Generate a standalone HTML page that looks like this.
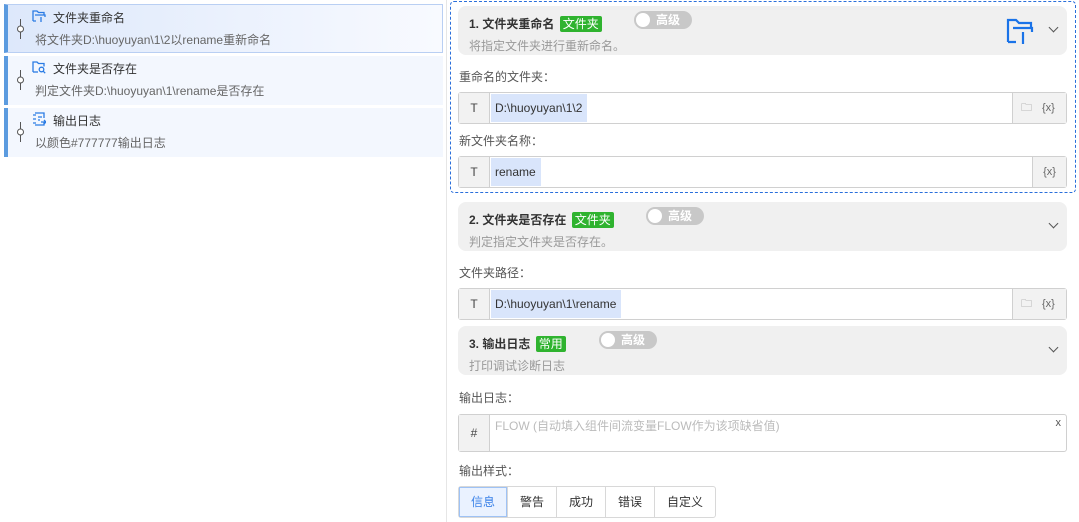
<!DOCTYPE html>
<html><head><meta charset="utf-8"><style>
*{box-sizing:border-box;margin:0;padding:0}
body{width:1079px;height:522px;overflow:hidden;background:#fff;font-family:"Liberation Sans","Noto Sans CJK SC",sans-serif;font-size:12px;color:#333;position:relative}
.abs{position:absolute}
.item{position:absolute;left:4px;width:439px;height:49px;background:#f3f7fe;border-left:4px solid #5b9bdf}
.item.sel{background:linear-gradient(90deg,#dde8fb,#f8faff);border:1px solid #b9cff3;border-left:4px solid #5b9bdf}
.item .t{position:absolute;left:45px;top:4px;font-size:12px;color:#333}
.item .d{position:absolute;left:27px;top:26px;font-size:12px;color:#666}
.item .pin{position:absolute;left:8px;top:14px;width:9px;height:20px}
.item .ic{position:absolute;left:24px;top:4px}
.hdr{position:absolute;left:458px;width:609px;height:49px;background:#f0f0f0;border-radius:8px}
.hdr .t{position:absolute;left:11px;top:9px;font-weight:bold;font-size:12px;color:#333}
.hdr .d{position:absolute;left:11px;top:31px;color:#999;font-size:12px}
.tag{display:inline-block;background:#2fb32f;color:#fff;font-weight:normal;padding:0 3px;border-radius:2px;margin-left:2px;line-height:16px}
.tog{position:absolute;top:5px;width:58px;height:18px;border-radius:9px;background:#c8c8c8;color:#fff;font-weight:bold;font-size:12px;line-height:18px;padding-left:22px}
.tog::before{content:"";position:absolute;left:2px;top:2px;width:14px;height:14px;border-radius:50%;background:#fff}
.chev{position:absolute;right:10px;top:18px;width:7px;height:7px;border-right:1.3px solid #555;border-bottom:1.3px solid #555;transform:rotate(45deg)}
.lbl{position:absolute;left:459px;color:#555;font-size:12px}
.inp{position:absolute;left:458px;width:609px;height:32px;border:1px solid #d0d0d0;border-radius:3px;background:#fff}
.inp .pre{position:absolute;left:0;top:0;bottom:0;width:31px;background:#f2f2f2;border-right:1px solid #d0d0d0;text-align:center;line-height:30px;color:#444}
.inp .val{position:absolute;left:32px;top:1px;height:28px;background:#d9e5fb;line-height:28px;padding:0 5px 0 4px;color:#333}
.inp .suf{position:absolute;right:0;top:0;bottom:0;background:#f2f2f2;border-left:1px solid #d0d0d0;color:#666;line-height:30px;font-size:11px}
.btns{position:absolute;left:458px;top:486px;height:32px;display:flex;border:1px solid #d8d8d8;border-radius:3px}
.btns div{width:49px;text-align:center;line-height:30px;border-right:1px solid #d8d8d8;color:#333;font-size:12px}
.btns div:last-child{border-right:none;width:60px}
.btns .on{background:#eaf2ff;color:#3b82e8;box-shadow:inset 0 0 0 1px #9ec2f5}
</style></head><body>

<div class="item sel" style="top:4px">
<svg class="pin" viewBox="0 0 9 20"><line x1="4.5" y1="0" x2="4.5" y2="20" stroke="#555"/><circle cx="4.5" cy="10" r="3" fill="#fff" stroke="#555"/></svg>
<svg class="ic" width="14" height="14" viewBox="0 0 14 14" fill="none" stroke="#2a7be4" stroke-width="1.3"><path d="M1 12V2h4l1.5 1.5H12v2"/><path d="M1 12h3M3 6h10v2M9 8v5"/></svg>
<div class="t">文件夹重命名</div><div class="d">将文件夹D:\huoyuyan\1\2以rename重新命名</div></div>
<div class="item" style="top:56px">
<svg class="pin" viewBox="0 0 9 20"><line x1="4.5" y1="0" x2="4.5" y2="20" stroke="#555"/><circle cx="4.5" cy="10" r="3" fill="#fff" stroke="#555"/></svg>
<svg class="ic" width="14" height="14" viewBox="0 0 14 14" fill="none" stroke="#2a7be4" stroke-width="1.3"><path d="M1 12V2h4l1.5 1.5H12v3"/><path d="M1 12h5"/><circle cx="9.5" cy="9.5" r="2.3"/><path d="M11.2 11.2l2 2"/></svg>
<div class="t">文件夹是否存在</div><div class="d">判定文件夹D:\huoyuyan\1\rename是否存在</div></div>
<div class="item" style="top:108px">
<svg class="pin" viewBox="0 0 9 20"><line x1="4.5" y1="0" x2="4.5" y2="20" stroke="#555"/><circle cx="4.5" cy="10" r="3" fill="#fff" stroke="#555"/></svg>
<svg class="ic" width="14" height="14" viewBox="0 0 14 14" fill="none" stroke="#2a7be4" stroke-width="1.3"><path d="M3 1h9v5M3 13h9V10M1 3h3M1 7h3M1 11h3M6 5h4M6 8h2M9 10h5M12 8l2 2-2 2"/></svg>
<div class="t">输出日志</div><div class="d">以颜色#777777输出日志</div></div>

<div class="abs" style="left:446px;top:0;width:1px;height:522px;background:#e6e6e6"></div>
<div class="abs" style="left:450px;top:1px;width:626px;height:192px;border:1px dashed #2a6fdb;border-radius:4px"></div>

<div class="hdr" style="top:6px"><div class="t">1. 文件夹重命名 <span class="tag">文件夹</span></div><div class="tog" style="left:176px">高级</div><div class="d">将指定文件夹进行重新命名。</div>
<svg class="abs" style="left:548px;top:11px" width="28" height="28" viewBox="0 0 28 28" fill="none" stroke="#1a73e8" stroke-width="2.2"><path d="M2 25V3h8l3 3h12v4"/><path d="M2 25h8M7 11h19v4M17 15v12"/></svg>
<div class="chev"></div></div>
<div class="lbl" style="top:68px">重命名的文件夹：</div>
<div class="inp" style="top:92px"><div class="pre">T</div><div class="val">D:\huoyuyan\1\2</div><div class="suf" style="width:54px"><span style="position:absolute;left:8px;color:#888">🗀</span><span style="position:absolute;left:29px">{x}</span></div></div>
<div class="lbl" style="top:132px">新文件夹名称：</div>
<div class="inp" style="top:156px"><div class="pre">T</div><div class="val">rename</div><div class="suf" style="width:34px;text-align:center">{x}</div></div>

<div class="hdr" style="top:202px"><div class="t">2. 文件夹是否存在 <span class="tag">文件夹</span></div><div class="tog" style="left:188px">高级</div><div class="d">判定指定文件夹是否存在。</div><div class="chev"></div></div>
<div class="lbl" style="top:264px">文件夹路径：</div>
<div class="inp" style="top:288px"><div class="pre">T</div><div class="val">D:\huoyuyan\1\rename</div><div class="suf" style="width:54px"><span style="position:absolute;left:8px;color:#888">🗀</span><span style="position:absolute;left:29px">{x}</span></div></div>

<div class="hdr" style="top:326px"><div class="t">3. 输出日志 <span class="tag">常用</span></div><div class="tog" style="left:141px">高级</div><div class="d">打印调试诊断日志</div><div class="chev"></div></div>
<div class="lbl" style="top:389px">输出日志：</div>
<div class="inp" style="top:414px;height:38px"><div class="pre" style="line-height:36px">#</div><div class="abs" style="left:36px;top:2px;color:#bbb">FLOW (自动填入组件间流变量FLOW作为该项缺省值)</div><div class="abs" style="right:5px;top:2px;color:#555;font-size:11px">x</div></div>
<div class="lbl" style="top:462px">输出样式：</div>
<div class="btns"><div class="on">信息</div><div>警告</div><div>成功</div><div>错误</div><div>自定义</div></div>
</body></html>
